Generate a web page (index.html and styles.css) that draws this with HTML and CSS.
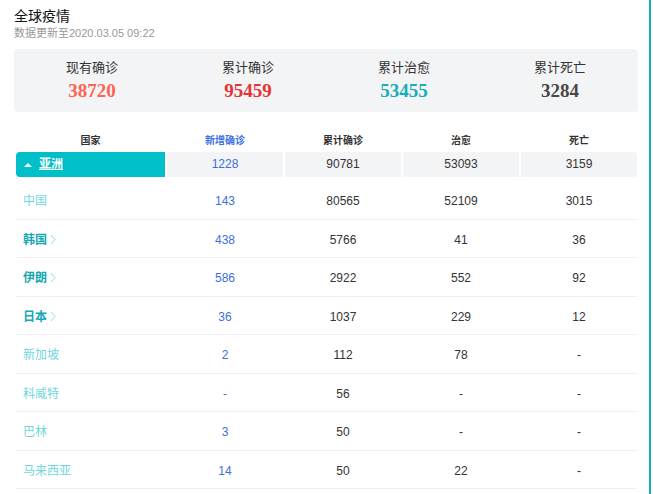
FILE: index.html
```html
<!DOCTYPE html>
<html lang="zh">
<head>
    <meta charset="UTF-8">
    <title>全球疫情</title>
    <link rel="stylesheet" href="styles.css">
</head>
<body>
    <div class="page">
        <div class="title">全球疫情</div>
        <div class="subtitle">数据更新至2020.03.05 09:22</div>

        <div class="summary">
            <div class="sum-item">
                <div class="sum-label">现有确诊</div>
                <div class="sum-num now">38720</div>
            </div>
            <div class="sum-item">
                <div class="sum-label">累计确诊</div>
                <div class="sum-num confirm">95459</div>
            </div>
            <div class="sum-item">
                <div class="sum-label">累计治愈</div>
                <div class="sum-num heal">53455</div>
            </div>
            <div class="sum-item">
                <div class="sum-label">累计死亡</div>
                <div class="sum-num dead">3284</div>
            </div>
        </div>

        <div class="table">
            <div class="row head">
                <div>国家</div>
                <div class="blue">新增确诊</div>
                <div>累计确诊</div>
                <div>治愈</div>
                <div>死亡</div>
            </div>
            <div class="row continent">
                <div class="name"><span class="caret"></span><u>亚洲</u></div>
                <div class="cell blue">1228</div>
                <div class="cell">90781</div>
                <div class="cell">53093</div>
                <div class="cell last">3159</div>
            </div>

            <div class="row country">
                <div class="name">中国</div>
                <div class="blue">143</div>
                <div>80565</div>
                <div>52109</div>
                <div>3015</div>
            </div>
            <div class="row country">
                <div class="name link">韩国<svg class="arrow" width="6" height="11" viewBox="0 0 6 11"><polyline points="1,1 5,5.5 1,10" /></svg></div>
                <div class="blue">438</div>
                <div>5766</div>
                <div>41</div>
                <div>36</div>
            </div>
            <div class="row country">
                <div class="name link">伊朗<svg class="arrow" width="6" height="11" viewBox="0 0 6 11"><polyline points="1,1 5,5.5 1,10" /></svg></div>
                <div class="blue">586</div>
                <div>2922</div>
                <div>552</div>
                <div>92</div>
            </div>
            <div class="row country">
                <div class="name link">日本<svg class="arrow" width="6" height="11" viewBox="0 0 6 11"><polyline points="1,1 5,5.5 1,10" /></svg></div>
                <div class="blue">36</div>
                <div>1037</div>
                <div>229</div>
                <div>12</div>
            </div>
            <div class="row country">
                <div class="name">新加坡</div>
                <div class="blue">2</div>
                <div>112</div>
                <div>78</div>
                <div>-</div>
            </div>
            <div class="row country">
                <div class="name">科威特</div>
                <div class="blue">-</div>
                <div>56</div>
                <div>-</div>
                <div>-</div>
            </div>
            <div class="row country">
                <div class="name">巴林</div>
                <div class="blue">3</div>
                <div>50</div>
                <div>-</div>
                <div>-</div>
            </div>
            <div class="row country">
                <div class="name">马来西亚</div>
                <div class="blue">14</div>
                <div>50</div>
                <div>22</div>
                <div>-</div>
            </div>
        </div>
    </div>
</body>
</html>
```

FILE: styles.css
```css
body {
    margin: 0;
    background: #fff;
    font-family: "Liberation Sans", "Noto Sans CJK SC", sans-serif;
    color: #333;
}

.page {
    width: 651px;
    height: 494px;
    border-right: 2px solid #1aabb8;
    overflow: hidden;
    padding: 6px 0 0 14px;
    box-sizing: border-box;
}

.title {
    font-size: 14px;
    line-height: 18px;
    color: #111;
    font-family: "Noto Sans CJK SC", sans-serif;
}

.subtitle {
    font-size: 11px;
    line-height: 16px;
    color: #999;
    margin-top: 1px;
}

.summary {
    display: grid;
    grid-template-columns: repeat(4, 1fr);
    width: 624px;
    height: 63px;
    margin-top: 8px;
    background: #f3f4f6;
    border-radius: 4px;
    box-sizing: border-box;
    padding-top: 9px;
}

.sum-item {
    text-align: center;
}

.sum-label {
    font-family: "Noto Sans CJK SC", sans-serif;
    font-size: 13px;
    line-height: 18px;
    color: #333;
}

.sum-num {
    font-family: "Liberation Serif", serif;
    font-weight: bold;
    font-size: 19px;
    line-height: 24px;
    margin-top: 3px;
}

.now { color: #ff6152; }
.confirm { color: #e83132; }
.heal { color: #19adb8; }
.dead { color: #474747; }

.table {
    width: 621px;
    margin: 18px 0 0 2px;
    font-size: 12px;
}

.row {
    display: grid;
    grid-template-columns: 149px repeat(4, 116px);
    column-gap: 2px;
    text-align: center;
}

.row.head {
    height: 22px;
    line-height: 22px;
    font-size: 10px;
    font-weight: bold;
    color: #333;
}

.row.continent {
    height: 25px;
    line-height: 25px;
    margin-bottom: 4px;
    color: #333;
}

.continent .name {
    background: #00bfc9;
    border-radius: 4px 0 0 4px;
    color: #fff;
    font-weight: bold;
    text-align: left;
    padding-left: 8px;
    display: flex;
    align-items: center;
    gap: 7px;
}

.caret {
    width: 0;
    height: 0;
    border-left: 4px solid transparent;
    border-right: 4px solid transparent;
    border-bottom: 4px solid #fff;
}

.continent .cell {
    background: #f3f4f6;
}

.continent .last {
    border-radius: 0 4px 4px 0;
}

.row.country {
    height: 34.5px;
    padding-top: 3px;
    line-height: 34.5px;
    border-bottom: 1px solid #efefef;
    color: #333;
}

.country .name {
    text-align: left;
    padding-left: 7px;
    color: #6fd6de;
}

.country .name.link {
    color: #14a8b2;
    font-weight: bold;
}

.arrow {
    margin-left: 3px;
    vertical-align: -1px;
    fill: none;
    stroke: #86e0e6;
    stroke-width: 1;
}

.blue {
    color: #3c6fe0;
}
```
